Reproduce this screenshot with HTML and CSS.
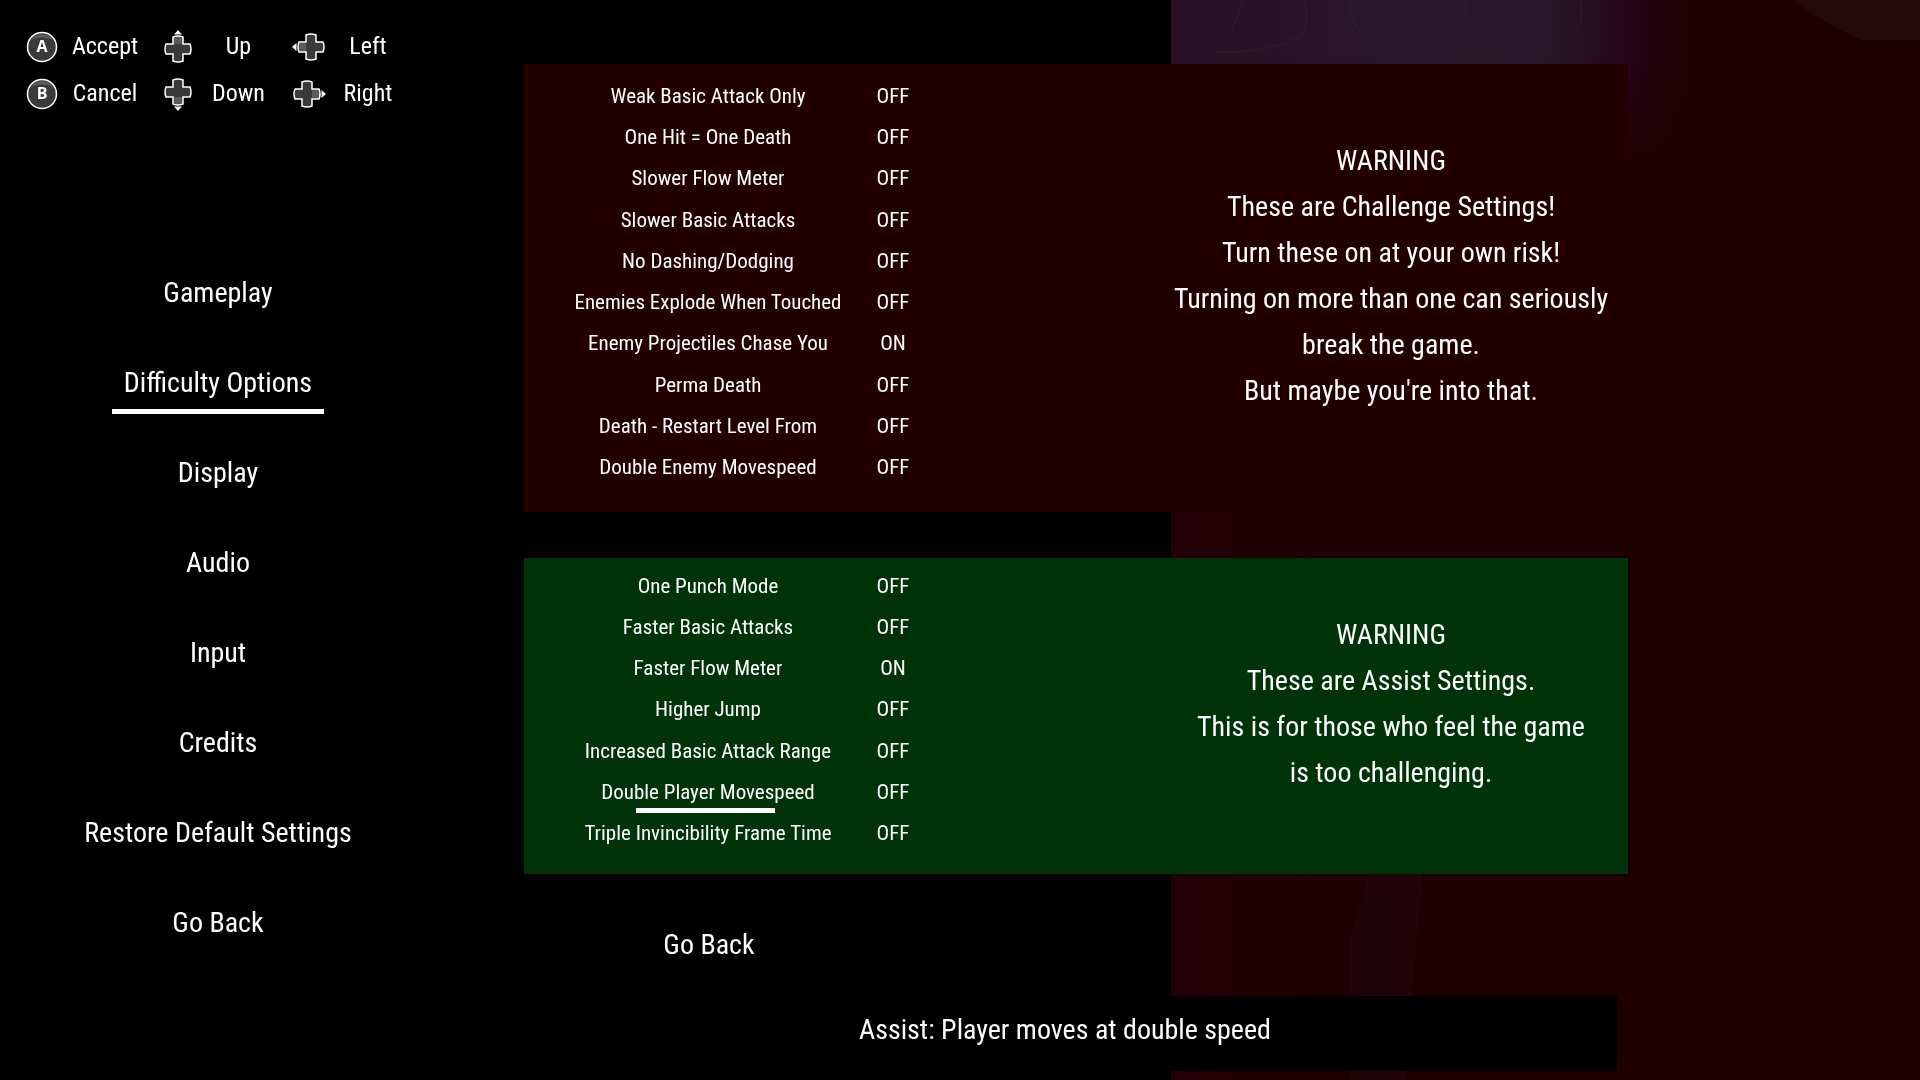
FILE: index.html
```
<!DOCTYPE html>
<html lang="en">
<head>
	<meta charset="UTF-8">
	<title>Difficulty Options</title>
	<link rel="stylesheet" href="styles.css">
</head>
<body>

	<!-- dimmed game scene behind the menu -->
	<svg class="scene" viewBox="0 0 750 1080" preserveAspectRatio="none" aria-hidden="true">
		<defs>
			<linearGradient id="sky" x1="0" y1="0" x2="1" y2="0">
				<stop offset="0" stop-color="#280f25"/>
				<stop offset="0.32" stop-color="#2a172b"/>
				<stop offset="0.5" stop-color="#28172a"/>
				<stop offset="0.62" stop-color="#240416"/>
				<stop offset="0.72" stop-color="#220003" stop-opacity="0"/>
			</linearGradient>
			<linearGradient id="fade" x1="0" y1="0" x2="0" y2="1">
				<stop offset="0" stop-color="#fff"/>
				<stop offset="0.2" stop-color="#fff"/>
				<stop offset="0.6" stop-color="#000"/>
			</linearGradient>
			<mask id="sky-mask">
				<rect width="750" height="280" fill="url(#fade)"/>
			</mask>
			<linearGradient id="edge" x1="0" y1="0" x2="1" y2="0">
				<stop offset="0" stop-color="#230008"/>
				<stop offset="1" stop-color="#210003" stop-opacity="0"/>
			</linearGradient>
		</defs>
		<rect width="750" height="1080" fill="#1f0002"/>
		<rect width="750" height="280" fill="url(#sky)" mask="url(#sky-mask)"/>
		<rect y="500" width="160" height="580" fill="url(#edge)"/>
		<path d="M624 0Q650 22 692 40H750V0Z" fill="#240a0c"/>
		<path d="M198 874L184 920L178 940L180 1080H234L248 920L252 874Z" fill="#21040a"/>
		<g fill="none" stroke="#31202f" stroke-width="2" opacity="0.5">
			<path d="M72 0Q66 20 60 30M134 0Q138 22 132 34Q100 54 44 52M180 0Q176 20 192 34M294 0Q300 12 288 24M240 44L262 34M410 0Q414 18 406 30"/>
		</g>
	</svg>

	<div class="page">
		<aside class="sidebar">
			<!-- controller hints -->
			<ul class="legend">
				<li>
					<svg class="icon" viewBox="0 0 34 34" aria-hidden="true">
						<circle cx="17" cy="17" r="14.5" fill="#3a3a3a" stroke="#fff" stroke-width="1.5"/>
						<path d="M6 10A13 13 0 0 1 28 10Q17 5 6 10Z" fill="#5a5a5a"/>
						<text class="letter" x="17" y="22">A</text>
					</svg>
					<span>Accept</span>
				</li>
				<li>
					<svg class="icon" viewBox="0 0 34 34" aria-hidden="true">
						<path d="M17 0L21 4.5H13Z" fill="#fff"/>
						<path d="M12 7Q17 5 22 7V14H29Q31 19 29 24H22V31Q17 33 12 31V24H5Q3 19 5 14H12Z" fill="#3a3a3a" stroke="#fff" stroke-width="1.5"/>
						<path d="M13 8Q17 6 21 8V14H13Z" fill="#5a5a5a"/>
					</svg>
					<span>Up</span>
				</li>
				<li>
					<svg class="icon" viewBox="0 0 34 34" aria-hidden="true">
						<path d="M0 17L4.5 13V21Z" fill="#fff"/>
						<path d="M7 12Q5 17 7 22H14V29Q19 31 24 29V22H31Q33 17 31 12H24V5Q19 3 14 5V12Z" fill="#3a3a3a" stroke="#fff" stroke-width="1.5"/>
						<path d="M8 13Q6 17 8 21H14V13Z" fill="#5a5a5a"/>
					</svg>
					<span>Left</span>
				</li>
				<li>
					<svg class="icon" viewBox="0 0 34 34" aria-hidden="true">
						<circle cx="17" cy="17" r="14.5" fill="#3a3a3a" stroke="#fff" stroke-width="1.5"/>
						<path d="M6 10A13 13 0 0 1 28 10Q17 5 6 10Z" fill="#5a5a5a"/>
						<text class="letter" x="17" y="22">B</text>
					</svg>
					<span>Cancel</span>
				</li>
				<li>
					<svg class="icon" viewBox="0 0 34 34" aria-hidden="true">
						<path d="M17 34L21 29.5H13Z" fill="#fff"/>
						<path d="M12 3Q17 1 22 3V10H29Q31 15 29 20H22V27Q17 29 12 27V20H5Q3 15 5 10H12Z" fill="#3a3a3a" stroke="#fff" stroke-width="1.5"/>
						<path d="M13 20H21V26Q17 28 13 26Z" fill="#5a5a5a"/>
					</svg>
					<span>Down</span>
				</li>
				<li>
					<svg class="icon" viewBox="0 0 34 34" aria-hidden="true">
						<path d="M34 17L29.5 13V21Z" fill="#fff"/>
						<path d="M27 12Q29 17 27 22H20V29Q15 31 10 29V22H3Q1 17 3 12H10V5Q15 3 20 5V12Z" fill="#3a3a3a" stroke="#fff" stroke-width="1.5"/>
						<path d="M20 13H26Q28 17 26 21H20Z" fill="#5a5a5a"/>
					</svg>
					<span>Right</span>
				</li>
			</ul>

			<nav class="menu">
				<button type="button">Gameplay</button>
				<button type="button" class="active">Difficulty Options</button>
				<button type="button">Display</button>
				<button type="button">Audio</button>
				<button type="button">Input</button>
				<button type="button">Credits</button>
				<button type="button">Restore Default Settings</button>
				<button type="button">Go Back</button>
			</nav>
		</aside>

		<main>
			<section class="panel challenge">
				<ul class="options">
					<li><label for="weak-attack">Weak Basic Attack Only</label><button type="button" id="weak-attack">OFF</button></li>
					<li><label for="one-hit">One Hit = One Death</label><button type="button" id="one-hit">OFF</button></li>
					<li><label for="slower-flow">Slower Flow Meter</label><button type="button" id="slower-flow">OFF</button></li>
					<li><label for="slower-attacks">Slower Basic Attacks</label><button type="button" id="slower-attacks">OFF</button></li>
					<li><label for="no-dash">No Dashing/Dodging</label><button type="button" id="no-dash">OFF</button></li>
					<li><label for="explode">Enemies Explode When Touched</label><button type="button" id="explode">OFF</button></li>
					<li><label for="chase">Enemy Projectiles Chase You</label><button type="button" id="chase">ON</button></li>
					<li><label for="perma-death">Perma Death</label><button type="button" id="perma-death">OFF</button></li>
					<li><label for="restart-level">Death - Restart Level From</label><button type="button" id="restart-level">OFF</button></li>
					<li><label for="enemy-speed">Double Enemy Movespeed</label><button type="button" id="enemy-speed">OFF</button></li>
				</ul>
				<p class="warning">
					WARNING<br>
					These are Challenge Settings!<br>
					Turn these on at your own risk!<br>
					Turning on more than one can seriously<br>
					break the game.<br>
					But maybe you're into that.
				</p>
			</section>

			<section class="panel assist">
				<ul class="options">
					<li><label for="one-punch">One Punch Mode</label><button type="button" id="one-punch">OFF</button></li>
					<li><label for="faster-attacks">Faster Basic Attacks</label><button type="button" id="faster-attacks">OFF</button></li>
					<li><label for="faster-flow">Faster Flow Meter</label><button type="button" id="faster-flow">ON</button></li>
					<li><label for="higher-jump">Higher Jump</label><button type="button" id="higher-jump">OFF</button></li>
					<li><label for="attack-range">Increased Basic Attack Range</label><button type="button" id="attack-range">OFF</button></li>
					<li class="selected"><label for="player-speed">Double Player Movespeed</label><button type="button" id="player-speed">OFF</button></li>
					<li><label for="frame-time">Triple Invincibility Frame Time</label><button type="button" id="frame-time">OFF</button></li>
				</ul>
				<p class="warning">
					WARNING<br>
					These are Assist Settings.<br>
					This is for those who feel the game<br>
					is too challenging.
				</p>
			</section>

			<button type="button" class="back">Go Back</button>

			<p class="hint">Assist: Player moves at double speed</p>
		</main>
	</div>

</body>
</html>
```
FILE: styles.css
```
* {
	margin: 0;
	padding: 0;
	box-sizing: border-box;
}

body {
	background-color: #000;
	color: #fff;
	font-family: "Roboto Condensed", Roboto, sans-serif;
	font-size: 28px;
	min-height: 100vh;
}

ul {
	list-style: none;
}

button {
	background: none;
	border: none;
	color: inherit;
	font: inherit;
	cursor: pointer;
}

.scene {
	position: fixed;
	top: 0;
	right: 0;
	width: 39%;
	height: 100%;
	z-index: -1;
}

.page {
	display: flex;
	min-height: 100vh;
}

/* left column */
.sidebar {
	width: 436px;
	flex-shrink: 0;
	padding-top: 23px;
}

.legend {
	display: grid;
	grid-template-columns: 136px 131px 128px;
	padding-left: 25px;
	font-size: 24px;
	line-height: 47px;
}

.legend li {
	display: flex;
	align-items: center;
}

.legend span {
	flex: 1;
	text-align: center;
	padding-right: 10px;
}

.icon {
	width: 34px;
	height: 34px;
}

.letter {
	fill: #fff;
	font-family: "Open Sans", sans-serif;
	font-size: 16px;
	font-weight: bold;
	text-anchor: middle;
}

.menu {
	display: flex;
	flex-direction: column;
	align-items: center;
	gap: 30px;
	margin-top: 145px;
}

.menu button {
	position: relative;
	height: 60px;
	padding: 0 12px;
}

.menu .active::after {
	content: "";
	position: absolute;
	left: 0;
	right: 0;
	bottom: -2px;
	height: 5px;
	background-color: #fff;
}

/* right column */
main {
	flex: 1;
	display: flex;
	flex-direction: column;
	padding: 64px 292px 9px 88px;
}

.panel {
	display: flex;
	justify-content: space-between;
}

.challenge {
	min-height: 448px;
	padding: 11px 0 24px;
	background-color: #230000;
}

.assist {
	min-height: 316px;
	margin-top: 46px;
	padding: 7px 0 20px;
	background-color: #003408;
}

.options {
	display: flex;
	flex-direction: column;
	padding-left: 20px;
	font-size: 21px;
}

.options li {
	flex: 1;
	display: flex;
	align-items: center;
	position: relative;
}

.options label {
	width: 328px;
	text-align: center;
}

.options button {
	width: 42px;
}

.options .selected::after {
	content: "";
	position: absolute;
	left: 92px;
	bottom: 0;
	width: 139px;
	height: 5px;
	background-color: #fff;
}

.warning {
	width: 474px;
	text-align: center;
	line-height: 46px;
}

.challenge .warning {
	padding-top: 63px;
}

.assist .warning {
	padding-top: 47px;
}

.back {
	width: 370px;
	height: 48px;
	margin-top: 46px;
}

.hint {
	margin: 28px 11px 0 -11px;
	padding-bottom: 7px;
	background-color: #000;
	text-align: center;
	line-height: 68px;
}
```
